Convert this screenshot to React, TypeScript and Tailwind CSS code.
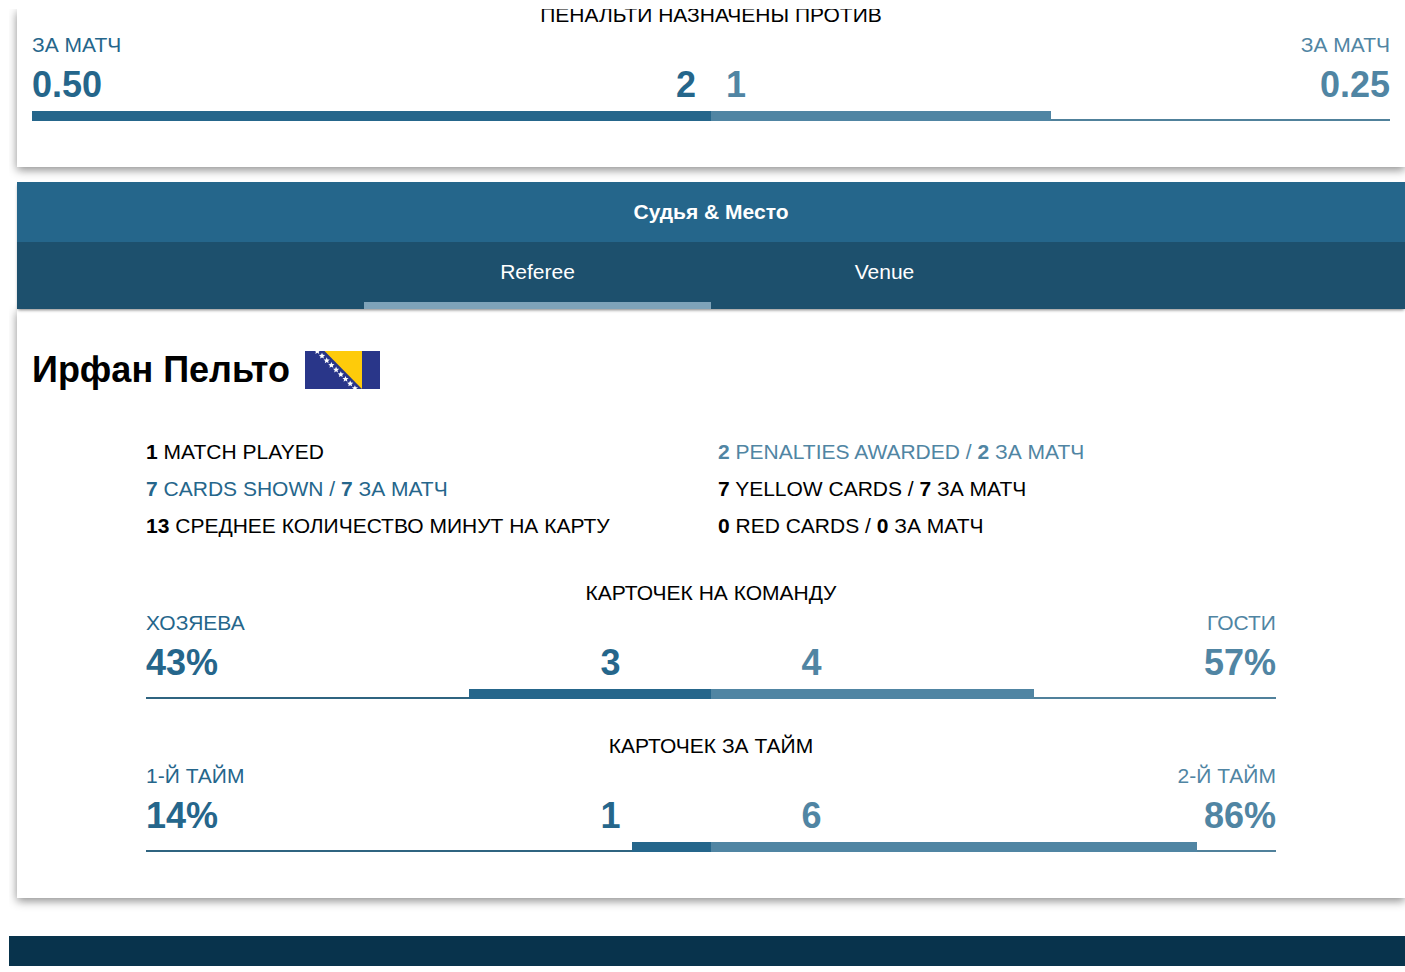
import { useState } from "react";

type Side = { label: string; value: string; count: number; share: number };

type ComparisonProps = {
  title: string;
  home: Side;
  away: Side;
  countPadding?: string;
  titleClass?: string;
};

function Comparison({
  title,
  home,
  away,
  countPadding = "px-[16%]",
  titleClass = "h-[30px]",
}: ComparisonProps) {
  return (
    <section>
      <h3 className={`flex items-end justify-center overflow-hidden text-center ${titleClass}`}>
        {title}
      </h3>
      <div className="grid grid-cols-2">
        <div className="text-[#25668b]">
          <p>{home.label}</p>
          <div className="flex justify-between pb-px text-[36px] leading-[50px] font-bold">
            <span>{home.value}</span>
            <span className={`flex-1 text-right ${countPadding}`}>{home.count}</span>
          </div>
          <div className="flex h-[10px] justify-end border-b-2 border-[#2f6480]">
            <div className="-mb-[2px] bg-[#25668b]" style={{ width: `${home.share}%` }} />
          </div>
        </div>
        <div className="text-[#5085a3]">
          <p className="text-right">{away.label}</p>
          <div className="flex justify-between pb-px text-[36px] leading-[50px] font-bold">
            <span className={`flex-1 ${countPadding}`}>{away.count}</span>
            <span>{away.value}</span>
          </div>
          <div className="flex h-[10px] border-b-2 border-[#50819b]">
            <div className="-mb-[2px] bg-[#5085a3]" style={{ width: `${away.share}%` }} />
          </div>
        </div>
      </div>
    </section>
  );
}

const STAR = "0,-3.2 0.9,-1.1 3.1,-1 1.4,0.5 1.9,2.6 0,1.5 -1.9,2.6 -1.4,0.5 -3.1,-1 -0.9,-1.1";

function BosniaFlag() {
  return (
    <svg viewBox="0 0 75 38" className="h-[38px] w-[75px]" role="img" aria-label="Bosnia and Herzegovina">
      <rect width="75" height="38" fill="#293689" />
      <polygon points="19.5,0 57,0 57,38" fill="#fecb0a" />
      {[0, 1, 2, 3, 4, 5, 6, 7, 8].map((i) => (
        <polygon key={i} points={STAR} fill="#fff" transform={`translate(${12.3 + i * 4.7} ${0.3 + i * 4.63})`} />
      ))}
    </svg>
  );
}

export default function App() {
  const [tab, setTab] = useState("Referee");
  return (
    <div className="min-h-screen bg-white pt-[9px] pl-[9px] font-['Liberation_Sans',Arial,sans-serif] text-[21px] leading-[30px] text-black">
      <main className="overflow-hidden pb-[38px] pl-2">
        <div className="bg-white px-[15px] pb-[46px] shadow-[0_3px_9px_rgba(0,0,0,0.45)]">
          <Comparison
            title="ПЕНАЛЬТИ НАЗНАЧЕНЫ ПРОТИВ"
            titleClass="h-[21px]"
            countPadding="px-[15px]"
            home={{ label: "ЗА МАТЧ", value: "0.50", count: 2, share: 100 }}
            away={{ label: "ЗА МАТЧ", value: "0.25", count: 1, share: 50 }}
          />
        </div>

        <div className="relative z-10 mt-[15px] shadow-[0_2px_3px_-1px_rgba(0,0,0,0.5)]">
          <h2 className="bg-[#25668b] text-center leading-[60px] font-bold text-white">Судья &amp; Место</h2>
          <div role="tablist" className="flex justify-center bg-[#1d506d]">
            {["Referee", "Venue"].map((name) => (
              <button
                key={name}
                type="button"
                role="tab"
                aria-selected={tab === name}
                onClick={() => setTab(name)}
                className={`w-1/4 border-b-[7px] leading-[60px] text-white ${
                  tab === name ? "border-[#7ea3b9]" : "border-transparent"
                }`}
              >
                {name}
              </button>
            ))}
          </div>
        </div>

        <div className="bg-white px-[15px] pt-9 pb-[46px] shadow-[0_3px_9px_rgba(0,0,0,0.45)]">
          <div className="flex items-center gap-[15px]">
            <h2 className="text-[36px] leading-[50px] font-bold">Ирфан Пельто</h2>
            <BosniaFlag />
          </div>
          <div className="px-[8.4%] pt-[38px]">
            <div className="grid grid-cols-2 gap-x-[14px] leading-[37px]">
              <p><b>1</b> MATCH PLAYED</p>
              <p className="text-[#5085a3]"><b>2</b> PENALTIES AWARDED / <b>2</b> ЗА МАТЧ</p>
              <p className="text-[#25668b]"><b>7</b> CARDS SHOWN / <b>7</b> ЗА МАТЧ</p>
              <p><b>7</b> YELLOW CARDS / <b>7</b> ЗА МАТЧ</p>
              <p><b>13</b> СРЕДНЕЕ КОЛИЧЕСТВО МИНУТ НА КАРТУ</p>
              <p><b>0</b> RED CARDS / <b>0</b> ЗА МАТЧ</p>
            </div>
            <div className="flex flex-col gap-8 pt-[34px]">
              <Comparison
                title="КАРТОЧЕК НА КОМАНДУ"
                home={{ label: "ХОЗЯЕВА", value: "43%", count: 3, share: 42.86 }}
                away={{ label: "ГОСТИ", value: "57%", count: 4, share: 57.14 }}
              />
              <Comparison
                title="КАРТОЧЕК ЗА ТАЙМ"
                home={{ label: "1-Й ТАЙМ", value: "14%", count: 1, share: 14 }}
                away={{ label: "2-Й ТАЙМ", value: "86%", count: 6, share: 86 }}
              />
            </div>
          </div>
        </div>
      </main>
      <footer className="h-[30px] bg-[#08334c]" />
    </div>
  );
}
